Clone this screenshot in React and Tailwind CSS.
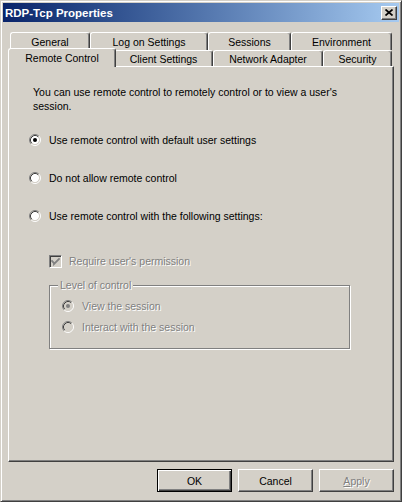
import React from "react";

const FONT = { fontFamily: '"Liberation Sans", Arial, sans-serif' };

function Radio({ checked, disabled }) {
  const fill = disabled ? "#d4d0c8" : "#ffffff";
  const dot = disabled ? "#808080" : "#000000";
  return (
    <svg width="12" height="12" viewBox="0 0 12 12" className="shrink-0">
      <circle cx="6" cy="6" r="4.2" fill={fill} />
      <path d="M2.11 9.89A5.5 5.5 0 0 1 9.89 2.11" fill="none" stroke="#808080" strokeWidth="1" />
      <path d="M9.89 2.11A5.5 5.5 0 0 1 2.11 9.89" fill="none" stroke="#ffffff" strokeWidth="1" />
      <path d="M2.82 9.18A4.5 4.5 0 0 1 9.18 2.82" fill="none" stroke="#404040" strokeWidth="1" />
      <path d="M9.18 2.82A4.5 4.5 0 0 1 2.82 9.18" fill="none" stroke="#d4d0c8" strokeWidth="1" />
      {checked && <circle cx="6" cy="6" r="2" fill={dot} />}
    </svg>
  );
}

function Checkbox() {
  return (
    <div className="w-[13px] h-[13px] shrink-0 border border-t-[#808080] border-l-[#808080] border-b-white border-r-white bg-[#d4d0c8] shadow-[inset_1px_1px_0_#404040,inset_-1px_-1px_0_#d4d0c8] flex items-center justify-center">
      <svg width="9" height="9" viewBox="0 0 9 9">
        <path d="M1 4 L3 6 L3 7 L8 2" fill="none" stroke="#808080" strokeWidth="1.8" strokeLinecap="square" />
      </svg>
    </div>
  );
}

function Tab({ label, w, selected }) {
  if (selected) {
    return (
      <div
        className="relative z-10 -ml-[2px] -mr-[2px] -mt-[2px] -mb-[1px] h-[19px] bg-[#d4d0c8] border-l border-t border-r border-l-white border-t-white border-r-[#404040] rounded-t-[3px] shadow-[inset_-1px_0_0_#808080] flex items-center justify-center pb-[1px] text-black"
        style={{ width: w + 4 }}
      >
        {label}
      </div>
    );
  }
  return (
    <div
      className="h-full bg-[#d4d0c8] border-l border-t border-r border-l-white border-t-white border-r-[#404040] rounded-t-[3px] shadow-[inset_-1px_0_0_#808080] flex items-center justify-center text-black"
      style={{ width: w }}
    >
      {label}
    </div>
  );
}

function Button({ children, isDefault, disabled }) {
  return (
    <div
      className={
        "w-[75px] h-[23px] flex items-center justify-center bg-[#d4d0c8] " +
        (isDefault
          ? "border border-black shadow-[inset_1px_1px_0_#fff,inset_-1px_-1px_0_#404040,inset_-2px_-2px_0_#808080]"
          : "border border-t-white border-l-white border-b-[#404040] border-r-[#404040] shadow-[inset_-1px_-1px_0_#808080]") +
        (disabled ? " text-[#808080] [text-shadow:1px_1px_0_#fff]" : " text-black")
      }
    >
      {children}
    </div>
  );
}

const dis = "text-[#808080] [text-shadow:1px_1px_0_#fff]";

export default function App() {
  return (
    <div
      className="w-[402px] h-[502px] bg-[#d4d0c8] border border-t-[#d4d0c8] border-l-[#d4d0c8] border-b-[#404040] border-r-[#404040] shadow-[inset_1px_1px_0_#fff,inset_-1px_-1px_0_#808080] p-[2px] flex flex-col text-[10.5px] leading-[14px] overflow-hidden"
      style={FONT}
    >
      {/* Title bar */}
      <div className="h-[19px] flex items-center justify-between bg-gradient-to-r from-[#0a246a] to-[#a6caf0] pl-[2px] pr-[2px]">
        <span className="text-white font-bold text-[11.5px]">RDP-Tcp Properties</span>
        <div className="w-[16px] h-[14px] bg-[#d4d0c8] border border-t-white border-l-white border-b-[#404040] border-r-[#404040] shadow-[inset_-1px_-1px_0_#808080] flex items-center justify-center">
          <svg width="8" height="7" viewBox="0 0 8 7">
            <path d="M0.5 0.5 L7.5 6.5 M7.5 0.5 L0.5 6.5" stroke="#000" strokeWidth="1.7" />
          </svg>
        </div>
      </div>

      {/* Tabs */}
      <div className="ml-[7px] mt-[10px] w-[382px] flex h-[18px]">
        <Tab label="General" w={80} />
        <Tab label="Log on Settings" w={118} />
        <Tab label="Sessions" w={83} />
        <Tab label="Environment" w={101} />
      </div>
      <div className="ml-[7px] w-[382px] flex h-[16px] items-end">
        <Tab label="Remote Control" w={104} selected />
        <Tab label="Client Settings" w={99} />
        <Tab label="Network Adapter" w={110} />
        <Tab label="Security" w={69} />
      </div>

      {/* Panel */}
      <div className="ml-[5px] w-[386px] h-[396px] border border-t-white border-l-white border-b-[#404040] border-r-[#404040] shadow-[inset_-1px_-1px_0_#808080] flex flex-col text-black">
        <p className="pl-[24px] pt-[18px] w-[340px]">
          You can use remote control to remotely control or to view a user's session.
        </p>
        <div className="mt-[20px] h-[14px] pl-[20px] flex items-center gap-[8px]">
          <Radio checked />
          <span>Use remote control with default user settings</span>
        </div>
        <div className="mt-[24px] h-[14px] pl-[20px] flex items-center gap-[8px]">
          <Radio />
          <span>Do not allow remote control</span>
        </div>
        <div className="mt-[24px] h-[14px] pl-[20px] flex items-center gap-[8px]">
          <Radio />
          <span>Use remote control with the following settings:</span>
        </div>
        <div className="mt-[31px] h-[14px] pl-[40px] flex items-center gap-[7px]">
          <Checkbox />
          <span className={dis}>Require user's permission</span>
        </div>
        <div className="relative ml-[40px] mt-[17px] w-[301px] h-[64px] border border-[#808080] shadow-[inset_1px_1px_0_#fff,1px_1px_0_#fff] pt-[13px] pl-[12px]">
          <span className={"absolute -top-[8px] left-[8px] px-[2px] bg-[#d4d0c8] " + dis}>Level of control</span>
          <div className="h-[14px] flex items-center gap-[8px]">
            <Radio checked disabled />
            <span className={dis}>View the session</span>
          </div>
          <div className="mt-[7px] h-[14px] flex items-center gap-[8px]">
            <Radio disabled />
            <span className={dis}>Interact with the session</span>
          </div>
        </div>
      </div>

      {/* Buttons */}
      <div className="mt-[7px] ml-[154px] flex gap-[6px]">
        <Button isDefault>OK</Button>
        <Button>Cancel</Button>
        <Button disabled>
          <span>
            <span className="underline">A</span>pply
          </span>
        </Button>
      </div>
    </div>
  );
}
